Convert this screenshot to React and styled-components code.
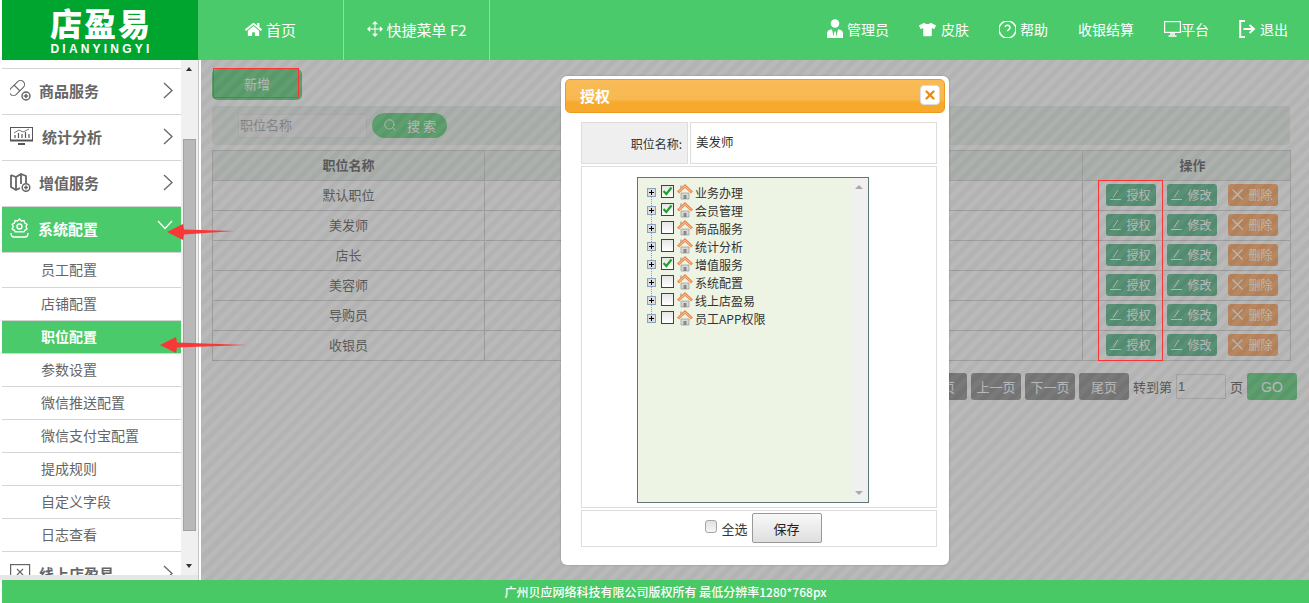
import React from "react";
import styled, { createGlobalStyle } from "styled-components";
import { FaHome, FaTshirt } from "react-icons/fa";
import { Search, X } from "lucide-react";

const GREEN = "#4aca6a";
const FONT = '"Noto Sans CJK SC", "Liberation Sans", sans-serif';

const Global = createGlobalStyle`
  html, body { margin: 0; padding: 0; background: #fff; }
  * { box-sizing: border-box; }
  body { font-family: ${FONT}; font-size: 13px; color: #333; }
`;

const Page = styled.div`
  position: relative; width: 1309px; height: 603px; overflow: hidden;
  display: flex; flex-direction: column; padding-left: 2px; background: #fff;
`;
const Header = styled.header`
  height: 60px; flex: none; display: flex; background: ${GREEN}; color: #fff;
`;
const Logo = styled.div`
  width: 196px; background: #00a52f; display: flex; flex-direction: column; align-items: center; color: #fff;
`;
const LogoName = styled.div`
  font-size: 32px; font-weight: 900; line-height: 33px; margin-top: 6px; letter-spacing: 2px; padding-left: 2px; height: 37px;
`;
const LogoSub = styled.div`
  font-family: "Liberation Sans", sans-serif; font-size: 12px; font-weight: 700; letter-spacing: 3.2px; padding-left: 3px; line-height: 12px;
`;
const NavTab = styled.a`
  width: 146px; border-right: 1px solid #8fe0a3; display: flex; align-items: center; justify-content: center; gap: 4px;
  font-size: 15px; color: #fff; padding-bottom: 2px;
`;
const NavRight = styled.nav`
  margin-left: auto; display: flex; align-items: center; gap: 30px; padding-right: 21px; padding-bottom: 2px;
`;
const NavItem = styled.a`
  display: flex; align-items: center; gap: ${p => p.$gap ?? 4}px; font-size: 14px; color: #fff; white-space: nowrap;
`;
const Body = styled.div`
  flex: 1; display: flex; min-height: 0;
`;
const Side = styled.aside`
  width: 196px; flex: none; display: flex; position: relative;
`;
const SideList = styled.div`
  width: 179px; flex: none; height: 515px; overflow: hidden; padding-top: 8px;
`;
const Menu = styled.div`
  height: ${p => p.$h || 46}px; display: flex; align-items: center; position: relative;
  border-top: 1px solid #d4d4d4;
  background: ${p => (p.$on ? GREEN : "#fff")};
  color: ${p => (p.$on ? "#fff" : "#666")};
  font-size: 15px; font-weight: 700; padding: 0 0 3px 8px;
`;
const MenuIcon = styled.span`
  width: ${p => p.$w || 29}px; display: flex; flex: none;
`;
const MenuArrow = styled.svg`
  position: absolute; right: 8px; top: 13px; fill: none; stroke-width: 1.3;
  stroke: ${p => (p.$on ? "#fff" : "#666")};
`;
const SubItem = styled.div`
  height: ${p => (p.$first ? 35 : 33)}px; display: flex; align-items: center; padding: 0 0 2px 39px; font-size: 14px;
  border-top: 1px solid #d4d4d4;
  background: ${p => (p.$on ? GREEN : "#fff")};
  color: ${p => (p.$on ? "#fff" : "#666")};
  font-weight: ${p => (p.$on ? 700 : 400)};
`;
const Scrollbar = styled.div`
  width: 17px; flex: none; height: 515px; background: #f0f0f0; position: relative;
  display: flex; flex-direction: column; align-items: center; padding-top: 79px;
`;
const Thumb = styled.div`
  width: 13px; height: 392px; background: #b8b8b8; border: 1px solid #a2a2a2;
`;
const ScrollArrow = styled.span`
  position: absolute; left: 5px; ${p => (p.$up ? "top: 7px;" : "top: 504px;")}
  border-left: 3.5px solid transparent; border-right: 3.5px solid transparent;
  ${p => (p.$up ? "border-bottom: 4px solid #333;" : "border-top: 4px solid #333;")}
`;
const SideFoot = styled.div`
  position: absolute; left: -2px; right: 0; top: 515px; height: 5px; background: #e6e6e6;
`;
const Main = styled.main`
  flex: 1; position: relative; border-left: 1px solid #c4c4c4; padding: 9px 19px 0 13px; min-width: 0;
  &::before { content: ""; position: absolute; left: 0; top: 0; bottom: 0; width: 3px; background: #fff; }
`;
const AddBtn = styled.button`
  width: 90px; height: 31px; border: 0; border-radius: 5px; background: ${GREEN}; color: #fff;
  font: 13px ${FONT}; display: block; padding: 0 0 2px;
`;
const SearchBand = styled.div`
  height: 39px; margin: 6px 0 5px; background: #e6ede6; border-radius: 4px; display: flex; align-items: center; padding-left: 26px; gap: 5px;
`;
const SearchInput = styled.div`
  width: 129px; height: 24px; background: #f2f2f2; border: 1px solid #e0e0e0; color: #999; font-size: 13px; line-height: 20px; padding-left: 1px;
`;
const SearchBtn = styled.button`
  width: 75px; height: 25px; border: 0; border-radius: 13px; background: ${GREEN}; color: #fff; font: 13px ${FONT};
  display: flex; align-items: center; justify-content: center; gap: 10px; padding: 0 0 1px;
`;
const Table = styled.table`
  border-collapse: collapse; table-layout: fixed; width: 1078px; font-size: 13px; color: #444;
  th, td { border: 1px solid #c9c9c9; height: 30px; text-align: center; padding: 0 0 2px; }
  th { background: #e6ede6; font-weight: 700; font-size: 13px; color: #444; }
  th:last-child { padding-left: 12px; }
`;
const Ops = styled.div`
  display: flex; justify-content: center; gap: 11px; padding-left: 10px;
`;
const OpBtn = styled.button`
  width: 50px; height: 22px; border: 0; border-radius: 3px; background: ${p => (p.$danger ? "#fe9a4a" : "#3fae78")}; color: #fff;
  font: 12px ${FONT}; display: flex; align-items: center; justify-content: center; gap: 5px; padding: 0;
`;
const Pager = styled.div`
  display: flex; align-items: center; justify-content: flex-end; gap: 4px; margin: 12px -7px 0 0; font-size: 13px; color: #444;
`;
const PageBtn = styled.button`
  width: 50px; height: 27px; border: 0; border-radius: 3px; background: #7f7f7f; color: #fff; font: 13px ${FONT}; padding: 0;
`;
const PageInput = styled.div`
  width: 50px; height: 25px; border: 1px solid #d8d8d8; font-size: 13px; line-height: 23px; padding-left: 1px; font-family: "Liberation Sans", sans-serif;
`;
const GoBtn = styled.button`
  width: 50px; height: 27px; border: 0; border-radius: 3px; background: ${GREEN}; color: #fff; font: 14px "Liberation Sans", sans-serif; padding: 0;
`;
const Shade = styled.div`
  position: absolute; inset: 0 0 0 2px;
  background: repeating-linear-gradient(135deg, rgba(104,104,104,.5) 0 5px, rgba(116,116,116,.5) 5px 10px);
`;
const Mark = styled.div`
  position: absolute; border: 1px solid #f33; left: ${p => p.$l}px; top: ${p => p.$t}px; width: ${p => p.$w}px; height: ${p => p.$h}px;
`;
const Dialog = styled.div`
  position: absolute; left: 362px; top: 16px; width: 388px; height: 489px; background: #fff; border-radius: 6px;
  box-shadow: 0 0 2px rgba(0,0,0,.25); padding: 3px 4px 0;
`;
const DialogTitle = styled.div`
  height: 34px; border: 1px solid #ee9a1c; border-radius: 5px; display: flex; align-items: center; justify-content: space-between;
  background: linear-gradient(#f9bb58 0, #f8b851 60%, #f6a92d 70%, #f6a92d 100%); color: #fff;
  font-size: 15px; font-weight: 700; padding: 0 4px 2px 14px;
`;
const CloseBtn = styled.span`
  width: 20px; height: 20px; background: #fff; border: 1px solid #ddd; border-radius: 4px; display: flex; align-items: center; justify-content: center;
`;
const DialogBody = styled.div`
  padding: 9px 8px 0 16px; display: flex; flex-direction: column; gap: 2px;
`;
const Row = styled.div`
  display: flex; gap: 2px;
`;
const LabelCell = styled.div`
  width: 107px; height: 42px; background: #efefef; border: 1px solid #ddd; display: flex; align-items: center; justify-content: flex-end;
  font-size: 12px; color: #333; padding-right: 5px;
`;
const ValueCell = styled.div`
  flex: 1; height: 42px; border: 1px solid #ddd; display: flex; align-items: center; padding: 0 0 4px 5px; font-size: 12.5px;
`;
const TreeCell = styled.div`
  height: 342px; border: 1px solid #ddd; padding: 10px 0 0 55px;
`;
const Tree = styled.div`
  width: 232px; height: 326px; border: 1px solid #5f7676; background: #edf4e4; position: relative; padding: 5px 0 0 9px;
`;
const TreeBar = styled.div`
  position: absolute; right: 0; top: 0; bottom: 0; width: 17px; background: #f0f0f0;
`;
const TreeArrow = styled.span`
  position: absolute; left: 4px; ${p => (p.$up ? "top: 7px;" : "bottom: 7px;")}
  border-left: 4px solid transparent; border-right: 4px solid transparent;
  ${p => (p.$up ? "border-bottom: 4px solid #aaa;" : "border-top: 4px solid #aaa;")}
`;
const TreeRow = styled.div`
  height: 18px; display: flex; align-items: center; font-size: 12px; color: #333; position: relative;
  &::after {
    content: ""; position: absolute; left: 4px; top: 13px; height: 10px; border-left: 1px dotted #999;
    display: ${p => (p.$last ? "none" : "block")};
  }
`;
const Plus = styled.span`
  width: 9px; height: 9px; border: 1px solid #8aa0bf; background: #ddd; position: relative; flex: none; margin-right: 5px;
  &::before { content: ""; position: absolute; left: 1px; right: 1px; top: 3px; height: 1px; background: #000; }
  &::after { content: ""; position: absolute; top: 1px; bottom: 1px; left: 3px; width: 1px; background: #000; }
`;
const Check = styled.span`
  width: 13px; height: 13px; border: 1px solid #1d4c70; background: linear-gradient(#e6e6e6, #fff); flex: none; margin-right: 3px;
  display: flex; align-items: center; justify-content: center; position: relative; top: -1px;
`;
const TreeLabel = styled.span`
  margin-left: 2px; white-space: nowrap;
`;
const SaveCell = styled.div`
  height: 37px; border: 1px solid #ddd; display: flex; align-items: center; justify-content: center; font-size: 13px; color: #333; padding: 0 0 1px 9px;
`;
const AllBox = styled.span`
  width: 12px; height: 13px; border: 1px solid #a5a5a5; border-radius: 3px; background: linear-gradient(#e2e2e2, #f6f6f6); margin-right: 4px; position: relative; top: -2px;
`;
const SaveBtn = styled.button`
  width: 70px; height: 30px; margin-left: 4px; border: 1px solid #999; border-radius: 2px; background: linear-gradient(#f8f8f8, #dfdfdf);
  font: 13px ${FONT}; color: #222; padding: 0;
`;
const Footer = styled.footer`
  height: 23px; flex: none; background: #48c966; color: #fff; font-size: 12px; font-weight: 500; display: flex; align-items: center; justify-content: center; padding-left: 20px;
`;
const ArrowLayer = styled.svg`
  position: absolute; left: 0; top: 0; pointer-events: none;
`;

const MoveIcon = () => (
  <svg width="16" height="16" viewBox="0 0 16 16" fill="#fff"><path d="M8 2v12M2 8h12" stroke="#fff" strokeWidth="1" /><path d="M8 0l3 3.200H5zM8 16l3-3.200H5zM0 8l3.200-3v6zM16 8l-3.200-3v6z" /></svg>
);
const UserIcon = () => (
  <svg width="16" height="20" viewBox="0 0 16 20" fill="#fff"><circle cx="8" cy="4.500" r="4.300" /><path d="M0 19v-4.500C0 12 2 10.600 5 10.300L6.500 17.500 7.400 12.500h1.200l.9 5L11 10.300c3 .3 5 1.700 5 4.200V19H0z" /></svg>
);
const HelpIcon = () => (
  <svg width="17" height="17" viewBox="2 2 20 20" fill="none" stroke="#fff" strokeWidth="1.700"><circle cx="12" cy="12" r="10" /><path d="M9.090 9a3 3 0 0 1 5.830 1c0 2-3 2.500-3 4" /><path d="M12 17.500h.01" /></svg>
);
const ScreenIcon = () => (
  <svg width="17" height="16" viewBox="0 0 17 16" fill="none" stroke="#fff"><rect x=".6" y=".6" width="15.800" height="10.800" strokeWidth="1.200" /><path d="M6 13h5M4.500 15h8" strokeWidth="1.600" /></svg>
);
const LogoutIcon = () => (
  <svg width="17" height="18" viewBox="0 0 17 18" fill="none" stroke="#fff"><path d="M6 1H1.200v16H6" strokeWidth="2" /><path d="M4.500 9h10M10.500 5l4.500 4-4.500 4" strokeWidth="2" /></svg>
);
const PillIcon = () => (
  <svg width="21" height="21" viewBox="0 0 21 21" fill="none" stroke="#666" strokeWidth="1.100"><rect x="-2" y="4" width="18" height="8" rx="4" transform="rotate(-45 7 8)" /><path d="M4 5l6 6" /><circle cx="16" cy="16" r="4" fill="#fff" strokeWidth="1.500" /><path d="M16 13.800v4.400M13.800 16h4.400" strokeWidth="1.500" /></svg>
);
const StatIcon = () => (
  <svg width="23" height="18" viewBox="0 0 23 18" fill="none" stroke="#555"><rect x=".5" y=".5" width="22" height="13" strokeWidth="1" /><path d="M0 13.500h23" strokeWidth="2" /><path d="M8 17h7" strokeWidth="2" /><path d="M5 11V8M8.500 11V6M12 11V7M15.500 11V5M19 11V7" strokeWidth="1.200" /><path d="M4 6l5-3 4 2 6-3" strokeWidth=".8" /></svg>
);
const MapIcon = () => (
  <svg width="21" height="20" viewBox="0 0 21 20" fill="none" stroke="#666" strokeWidth="1.800"><path d="M1 3l5 2 5-3 5 2v7M1 3v12l5 3 4-2M6 5v13M11 2v10" /><circle cx="16" cy="15.500" r="3.800" fill="#fff" strokeWidth="1.500" /><path d="M16 13.500v4M14 15.500h4" strokeWidth="1.500" /></svg>
);
const GearIcon = () => (
  <svg width="19" height="20" viewBox="0 0 19 20" fill="none" stroke="#fff"><path d="M9.500 1l2 2 2.500-.500.800 2.500 2.200 1.300-1 2.400 1 2.300-2.200 1.300-.800 1.500H5.200l-.800-1.500-2.200-1.300 1-2.300-1-2.400L4.400 5l.800-2.500 2.300.500z" strokeWidth="1.400" /><circle cx="9.500" cy="8.500" r="2.500" strokeWidth="1.400" /><path d="M1 15c0 3 1 4 3 4h11c2 0 3-1 3-4" strokeWidth="1.400" /></svg>
);
const BoxIcon = () => (
  <svg width="21" height="18" viewBox="0 0 21 18" fill="none" stroke="#666" strokeWidth="1.200"><rect x=".6" y=".6" width="19" height="14" /><path d="M7 5l6 6M13 5l-6 6" /></svg>
);
const HomeTree = () => (
  <svg width="16" height="16" viewBox="0 0 16 16"><path d="M4 9h8v6H4z" fill="#d8d8d8" stroke="#999" strokeWidth=".7" /><path d="M6.500 11h3v4h-3z" fill="#888" /><path d="M3 1.500h2v3H3z" fill="#bbb" /><path d="M1 8.500L8 2l7 6.500" fill="none" stroke="#ee8a4e" strokeWidth="3" /><path d="M1.800 7.800L8 2.200l6.200 5.600" fill="none" stroke="#fbd0ac" strokeWidth=".8" /></svg>
);
const Tick = () => (
  <svg width="11" height="10" viewBox="0 0 11 10" fill="none" stroke="#1fa32a" strokeWidth="2.200"><path d="M1.500 5l2.800 3L9.500 1.500" /></svg>
);
const EditIcon = () => (
  <svg width="11" height="11" viewBox="0 0 11 11" fill="none" stroke="#fff" strokeWidth="1"><path d="M0 10.500h11M3 8.500L8 1" /></svg>
);
const CrossIcon = () => (
  <svg width="11" height="11" viewBox="0 0 11 11" fill="none" stroke="#fff" strokeWidth="1.400"><path d="M.5.5l10 10M10.500.5l-10 10" /></svg>
);
const ChevR = () => (
  <MenuArrow width="10" height="17" viewBox="0 0 10 17"><path d="M1 1l8 7.500L1 16" /></MenuArrow>
);
const ChevD = () => (
  <MenuArrow $on width="16" height="10" viewBox="0 0 16 10"><path d="M1 1l7 7.500L15 1" /></MenuArrow>
);

const menusTop = [
  ["商品服务", <PillIcon />, 29],
  ["统计分析", <StatIcon />, 32],
  ["增值服务", <MapIcon />, 29],
];
const subs = ["员工配置", "店铺配置", "职位配置", "参数设置", "微信推送配置", "微信支付宝配置", "提成规则", "自定义字段", "日志查看"];
const roles = ["默认职位", "美发师", "店长", "美容师", "导购员", "收银员"];
const tree = [["业务办理", 1], ["会员管理", 1], ["商品服务", 0], ["统计分析", 0], ["增值服务", 1], ["系统配置", 0], ["线上店盈易", 0], ["员工APP权限", 0]];

const Op = ({ danger, children }) => (
  <OpBtn $danger={danger}>
    {danger ? <CrossIcon /> : <EditIcon />}
    {children}
  </OpBtn>
);

export default function App() {
  return (
    <Page>
      <Global />
      <Header>
        <Logo>
          <LogoName>店盈易</LogoName>
          <LogoSub>DIANYINGYI</LogoSub>
        </Logo>
        <NavTab><FaHome size={17} />首页</NavTab>
        <NavTab><MoveIcon />快捷菜单 F2</NavTab>
        <NavRight>
          <NavItem><UserIcon />管理员</NavItem>
          <NavItem $gap={5}><FaTshirt size={17} />皮肤</NavItem>
          <NavItem><HelpIcon />帮助</NavItem>
          <NavItem>收银结算</NavItem>
          <NavItem $gap={0}><ScreenIcon />平台</NavItem>
          <NavItem><LogoutIcon />退出</NavItem>
        </NavRight>
      </Header>
      <Body>
        <Side>
          <SideList>
            {menusTop.map(([t, ic, w]) => (
              <Menu key={t}>
                <MenuIcon $w={w}>{ic}</MenuIcon>{t}
                <ChevR />
              </Menu>
            ))}
            <Menu $on>
              <MenuIcon $w={28}><GearIcon /></MenuIcon>系统配置
              <ChevD />
            </Menu>
            {subs.map((s, i) => <SubItem key={s} $first={i === 0} $on={s === "职位配置"}>{s}</SubItem>)}
            <Menu>
              <MenuIcon $w={29}><BoxIcon /></MenuIcon>线上店盈易
              <ChevR />
            </Menu>
          </SideList>
          <Scrollbar>
            <ScrollArrow $up />
            <Thumb />
            <ScrollArrow />
          </Scrollbar>
          <SideFoot />
        </Side>
        <Main>
          <AddBtn>新增</AddBtn>
          <SearchBand>
            <SearchInput>职位名称</SearchInput>
            <SearchBtn><Search size={14} strokeWidth={1.6} />搜 索</SearchBtn>
          </SearchBand>
          <Table>
            <colgroup><col width="272" /><col width="598" /><col width="208" /></colgroup>
            <thead><tr><th>职位名称</th><th></th><th>操作</th></tr></thead>
            <tbody>
              {roles.map(r => (
                <tr key={r}>
                  <td>{r}</td>
                  <td></td>
                  <td><Ops><Op>授权</Op><Op>修改</Op><Op danger>删除</Op></Ops></td>
                </tr>
              ))}
            </tbody>
          </Table>
          <Pager>
            <PageBtn>首页</PageBtn><PageBtn>上一页</PageBtn><PageBtn>下一页</PageBtn><PageBtn>尾页</PageBtn>
            <span>转到第</span><PageInput>1</PageInput><span>页</span><GoBtn>GO</GoBtn>
          </Pager>
          <Shade />
          <Mark $l={14} $t={8} $w={86} $h={30} />
          <Mark $l={899} $t={120} $w={65} $h={181} />
          <Dialog>
            <DialogTitle>授权<CloseBtn><X size={14} strokeWidth={4} color="#ee8a10" /></CloseBtn></DialogTitle>
            <DialogBody>
              <Row>
                <LabelCell>职位名称:</LabelCell>
                <ValueCell>美发师</ValueCell>
              </Row>
              <TreeCell>
                <Tree>
                  {tree.map(([t, on], i) => (
                    <TreeRow key={t} $last={i === tree.length - 1}>
                      <Plus />
                      <Check>{on ? <Tick /> : null}</Check>
                      <HomeTree />
                      <TreeLabel>{t}</TreeLabel>
                    </TreeRow>
                  ))}
                  <TreeBar><TreeArrow $up /><TreeArrow /></TreeBar>
                </Tree>
              </TreeCell>
              <SaveCell><AllBox />全选<SaveBtn>保存</SaveBtn></SaveCell>
            </DialogBody>
          </Dialog>
        </Main>
      </Body>
      <Footer>广州贝应网络科技有限公司版权所有 最低分辨率1280*768px</Footer>
      <ArrowLayer width="1309" height="603">
        <path d="M167 232L183 224 184 229.500 234 231 184 234.500 183 240z" fill="#f83838" />
        <path d="M160 345L176 337 177 342.500 247 345 177 347.500 176 353z" fill="#f83838" />
      </ArrowLayer>
    </Page>
  );
}
